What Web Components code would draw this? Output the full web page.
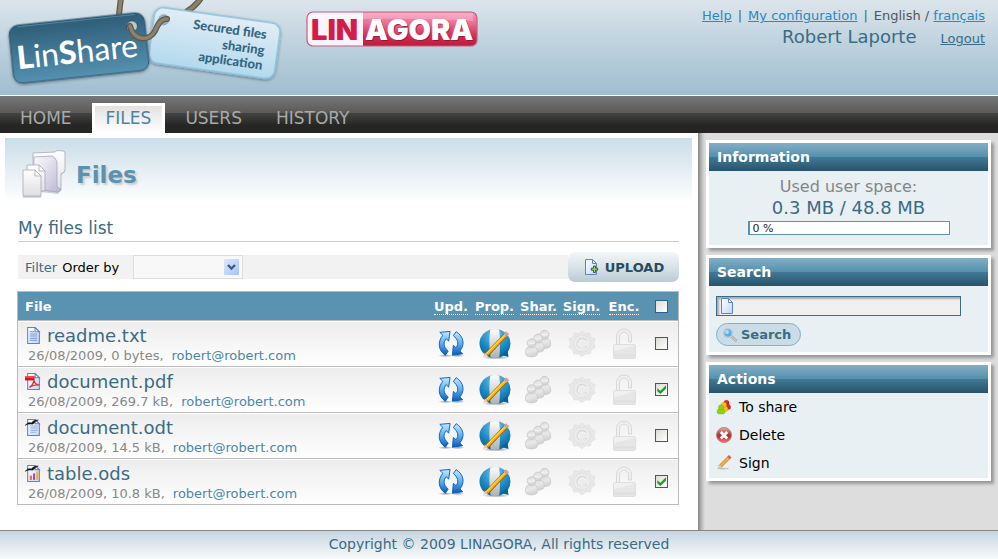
<!DOCTYPE html>
<html lang="en">
<head>
<meta charset="utf-8">
<title>LinShare - Files</title>
<style>
  body { margin: 0; font-family: "DejaVu Sans", Verdana, sans-serif; font-size: 13px; color: #000; }
</style>
</head>
<body>
<ls-app>
  <ls-header slot="header"></ls-header>
  <ls-nav slot="nav">
    <ls-tab href="#home">HOME</ls-tab>
    <ls-tab href="#files" current>FILES</ls-tab>
    <ls-tab href="#users">USERS</ls-tab>
    <ls-tab href="#history">HISTORY</ls-tab>
  </ls-nav>
  <ls-banner slot="main">Files</ls-banner>
  <ls-files slot="main"></ls-files>
  <ls-panel slot="side" heading="Information"><ls-quota></ls-quota></ls-panel>
  <ls-panel slot="side" heading="Search"><ls-search></ls-search></ls-panel>
  <ls-panel slot="side" heading="Actions"><ls-actions></ls-actions></ls-panel>
  <span slot="footer">Copyright © 2009 LINAGORA, All rights reserved</span>
</ls-app>

<script>
const define = (name, html, setup) => {
  const template = document.createElement('template');
  template.innerHTML = html;
  customElements.define(name, class extends HTMLElement {
    constructor() {
      super();
      this.attachShadow({ mode: 'open' }).append(template.content.cloneNode(true));
    }
    connectedCallback() { if (setup) setup(this, this.shadowRoot); }
  });
};

const page = `<path d="M2.500 .5h7l4 4v11h-11z" fill="url(#p)" stroke="#5f84c4"/><path d="M9.500 .5v4h4z" fill="#fff" stroke="#5f84c4"/>`;
const pageGrad = `<linearGradient id="p" x2="1" y2="1"><stop stop-color="#fff"/><stop offset="1" stop-color="#c3d6f7"/></linearGradient>`;
const bird = `<path d="M.3 6C2 3.300 4 3 6 3.800C7.500 1.600 10 1 12.500 1C10 2 9 3.300 7.500 4.800C4.500 4.600 2 4.600 .3 6z" fill="#111" stroke="#111" stroke-width=".5"/>`;
const person = (x, y) => `<g transform="translate(${x} ${y})"><path d="M.5 16c0-5 1.500-7.500 6.500-7.500s6.500 2.500 6.500 7.500c0 5-13 5-13 0z" fill="url(#m)" stroke="#cacaca" stroke-width=".8"/><circle cx="7" cy="5" r="4.600" fill="url(#m)" stroke="#c6c6c6" stroke-width=".8"/><path d="M3.500 4.500q3.500 2 7 0" fill="none" stroke="#f4f4f4" stroke-width="1.200"/></g>`;
const smallPerson = (x, y, c, d) => `<g transform="translate(${x} ${y})" fill="${c}" stroke="${d}" stroke-width=".4"><path d="M0 8c0-3 1-4 4-4s4 1 4 4c0 2-8 2-8 0z"/><circle cx="4" cy="2.800" r="2.600"/></g>`;
const icons = {
  txt: [16, 16, `<defs>${pageGrad}</defs>${page}<path d="M4.500 4.500h4M4.500 6.500h7M4.500 8.500h7M4.500 10.500h7M4.500 12.500h7" stroke="#6f92cf"/>`],
  blank: [16, 16, `<defs>${pageGrad}</defs>${page}`],
  pdf: [16, 16, `<defs>${pageGrad}</defs>${page}<path d="M0 3h9v4H0z" fill="#d5141c"/><path d="M0 3h9v1.500H0z" fill="#f0565a"/><path d="M4 13.500c2-1 4-4 4.500-6.500c.5 2 2 4 5 4.500c-3-.8-6 0-9.500 2" fill="none" stroke="#e03030" stroke-width="1.200"/>`],
  odt: [16, 16, `<defs>${pageGrad}</defs>${page}<path d="M5 6.500h7M5 8.500h7M5 10.500h7M5 12.500h5" stroke="#8fadde"/>${bird}`],
  ods: [16, 16, `<defs>${pageGrad}</defs>${page}<path d="M4.500 10h2v4h-2z" fill="#f0683c"/><path d="M7.500 8h2v6h-2z" fill="#9a4cc4"/><path d="M10.500 6h2v8h-2z" fill="#f5b51c"/>${bird}`],
  upload: [16, 16, `<defs>${pageGrad}</defs>${page}<path d="M10.500 7h2v2.200h2.200v2h-2.200v2.300h-2v-2.300H8.300v-2h2.200z" fill="#8fe05a" stroke="#3a4a3a" stroke-width=".9"/>`],
  update: [30, 30, `<defs><linearGradient id="u" x2="0" y2="1"><stop stop-color="#c3eaff"/><stop offset=".5" stop-color="#5fb0ec"/><stop offset="1" stop-color="#0a55b8"/></linearGradient><radialGradient id="s"><stop stop-color="#000" stop-opacity=".4"/><stop offset="1" stop-opacity="0"/></radialGradient></defs><ellipse cx="9" cy="27.500" rx="8" ry="1.600" fill="url(#s)"/><ellipse cx="22" cy="27.500" rx="8" ry="1.600" fill="url(#s)"/><g fill="url(#u)" stroke="#0b5fb8" stroke-linejoin="round"><path d="M3 2.500L14 1.500L12.500 12L10 9.300C6.500 13 6.500 18 12 22.500L9 27C1 22 .5 12 6.300 5.700z"/><path d="M17.500 6L20.500 1.800C29 7 30 16 24.500 22.500L27.500 25.500L16.500 27L17.500 16.500L20.500 19C23.500 14.500 22.500 10 17.500 6z"/></g>`],
  properties: [32, 32, `<defs><radialGradient id="b" cx=".5" cy=".2" r=".85"><stop stop-color="#6cc6ee"/><stop offset=".6" stop-color="#1682bd"/><stop offset="1" stop-color="#07588c"/></radialGradient><linearGradient id="w" x2="0" y2="1"><stop stop-color="#fff"/><stop offset="1" stop-color="#a9adb0"/></linearGradient><clipPath id="c"><ellipse cx="16" cy="15.500" rx="15.500" ry="14.500"/></clipPath><radialGradient id="s"><stop stop-opacity=".45"/><stop offset="1" stop-opacity="0"/></radialGradient></defs><ellipse cx="17" cy="29.500" rx="14" ry="2" fill="url(#s)"/><g clip-path="url(#c)"><path d="M0 0h32v32H0z" fill="url(#b)"/><path d="M11.500 0Q9 15 12 32h8Q22 15 20 0z" fill="url(#w)"/></g><path d="M22 27l7.500 2-1-7z" fill="#08639a"/><path d="M27.500 6L7.500 27" stroke="#8b5b12" stroke-width="4.200"/><path d="M27 6.500L8 26" stroke="#f9b716" stroke-width="3.200"/><path d="M26.500 6L7.500 25.500" stroke="#ffe06d"/><path d="M6 24.500L4 29l5-1.500z" fill="#e9cba1"/><path d="M28.700 4.700l-2 2" stroke="#d5a0a0" stroke-width="4.400"/><path d="M27.300 6.200l-1 1" stroke="#aaa" stroke-width="4.400"/>`],
  share: [32, 32, `<defs><linearGradient id="m" x2=".3" y2="1"><stop stop-color="#d6d6d6"/><stop offset=".5" stop-color="#e8e8e8"/><stop offset="1" stop-color="#d4d4d4"/></linearGradient></defs>${person(15, 1)}${person(8, 5)}${person(1, 10)}`],
  sign: [30, 30, `<path d="M15 1l3.500 3l4.500-1l1.500 4.500l4.500 2l-1.500 4.500l1.500 4.500l-4 2.500l-1 4.500l-5 0l-4 3l-4-3l-5 0l-1-4.500l-4-2.500l1.500-4.500l-1.500-4.500l4.500-2l1.500-4.500l4.500 1z" fill="#e8e8e8" stroke="#dfdfdf" stroke-width=".8" stroke-linejoin="round"/><circle cx="15" cy="14.500" r="9" fill="#ececec" stroke="#dedede" stroke-width=".8"/><path d="M19.500 11.500a5.200 5.200 0 1 0 0 6" fill="none" stroke="#dadada" stroke-width="2"/><path d="M19.500 13a4.500 4.500 0 1 0 -1 5.500" fill="none" stroke="#f7f7f7"/>`],
  lock: [28, 32, `<path d="M6.500 17V8.500a7.500 7.500 0 0 1 15 0V14h-3V8.500a4.500 4.500 0 0 0-9 0V17z" fill="#f0f0f0" stroke="#cfcfcf" stroke-width=".8"/><rect x="3.500" y="16.500" width="22" height="14" rx="1.500" fill="#e6e6e6" stroke="#dadada" stroke-width=".8"/><path d="M4 23q10-2 21-5.500v-.5H4z" fill="#f0f0f0"/><path d="M4 27.500h21" stroke="#dedede" stroke-width="2"/>`],
  chevron: [15, 16, `<defs><linearGradient id="g" x2="1" y2="1"><stop stop-color="#dce8ff"/><stop offset="1" stop-color="#a9c3f8"/></linearGradient></defs><rect width="15" height="16" rx="1" fill="url(#g)"/><path d="M4 6l3.500 3.500L11 6" fill="none" stroke="#3f5b86" stroke-width="2.400"/>`],
  find: [16, 16, `<path d="M9 9l5.500 5" stroke="#aaa" stroke-width="2.600"/><path d="M9 9l5 4.500" stroke="#e4d6cf"/><circle cx="6" cy="6" r="4.300" fill="#58aee8" stroke="#b9c8d6" stroke-width="1.600"/><circle cx="5" cy="5" r="2" fill="#a9dbfa"/>`],
  people: [16, 16, `${smallPerson(6.500, 1, '#df2626', '#a11')}${smallPerson(4, 3, '#f5c314', '#c80')}${smallPerson(1, 5.500, '#8fd012', '#6fae10')}`],
  remove: [16, 16, `<defs><linearGradient id="r" x2="0" y2="1"><stop stop-color="#e9b0ac"/><stop offset=".45" stop-color="#a84040"/><stop offset=".6" stop-color="#bb2b2b"/><stop offset="1" stop-color="#ff7a72"/></linearGradient></defs><circle cx="8" cy="8" r="7.500" fill="url(#r)" stroke="#b98080"/><path d="M4.800 5l6.400 6.500M11.200 5L4.800 11.500" stroke="#fff" stroke-width="2.800"/>`],
  pencil: [16, 16, `<path d="M1 13.500q3-2 5-1t6 .5l1 1q-7 1-12-.5z" fill="#bbb"/><path d="M1.500 10.500h4" stroke="#ccc"/><path d="M13 2.500L4.500 11" stroke="#b97618" stroke-width="3.400"/><path d="M13 2.500L4.500 11" stroke="#f7b045" stroke-width="2.400"/><path d="M14.300 1.200l-1.800 1.800" stroke="#dc5a5a" stroke-width="3.400"/><path d="M3.200 9.700L1 14l4.500-1.700z" fill="#dfc9a8"/>`],
  folder: [46, 50, `<defs><linearGradient id="f" x2="1" y2="1"><stop stop-color="#fbfbff"/><stop offset=".5" stop-color="#dcdaea"/><stop offset="1" stop-color="#b8b5cf"/></linearGradient><linearGradient id="k" x2="0" y2="1"><stop stop-color="#fff"/><stop offset="1" stop-color="#dedee4"/></linearGradient></defs><path d="M11 4l23-1.500l1-2l7 .5l1 2v19l-4 3v16l-3 3l-25-3z" fill="#a8a8b8" opacity=".5"/><path d="M11 3l22-1l2-1.500l7 .5l1 2v18l-4 3v16l-4 2l-24-4z" fill="url(#k)" stroke="#aaa8b8" stroke-width=".8"/><path d="M12 7l18-1l3 2l2 4v25l4 2l-3 3l-24-3z" fill="url(#f)" stroke="#a7a4bf" stroke-width=".8"/><g stroke="#a9a9ad" stroke-width=".8" fill="url(#k)"><path d="M5 15h12l6 6v20H5z"/><path d="M17 15v6h6z" fill="#fff"/><path d="M1 20h12l6 6v20H1z"/><path d="M13 20v6h6z" fill="#fff"/></g><path d="M1 47h18" stroke="#888" opacity=".6"/>`]
};
const iconStyle = '<style>:host{display:inline-block;line-height:0;flex:none}svg{display:block}</style>';
define('ls-icon', iconStyle, (host, root) => {
  const [w, h, body] = icons[host.getAttribute('name')];
  const width = Number(host.getAttribute('width') || w);
  root.innerHTML = `${iconStyle}<svg aria-hidden="true" width="${width}" height="${Math.round(h * width / w)}" viewBox="0 0 ${w} ${h}">${body}</svg>`;
});

define('ls-app', `
<style>
  :host { display: flex; flex-direction: column; min-height: 100vh; }
  .body { flex: 1; display: grid; grid-template-columns: minmax(0, 1fr) 300px; }
  main { background: #fff; padding: 5px 6px 0 5px; }
  aside { display: flex; flex-direction: column; gap: 7px; padding: 7px 7px 0 8px;
    background: linear-gradient(90deg, #858585, #b0b0b0 3px, #cacaca 5px, #ddd 7px); }
  footer { border-top: 1px solid #858585; height: 28px; line-height: 26px; text-align: center; font-size: 14px; color: #3b6b85;
    background: linear-gradient(#c6d5e0, #f8fafb); }
</style>
<slot name="header"></slot>
<slot name="nav"></slot>
<div class="body">
  <main><slot name="main"></slot></main>
  <aside><slot name="side"></slot></aside>
</div>
<footer><slot name="footer"></slot></footer>`);

define('ls-logo', `
<style>:host { display: block; } svg { display: block; }</style>
<svg width="290" height="95" viewBox="0 0 290 95" role="img" aria-label="LinShare, secured files sharing application">
  <defs>
    <linearGradient id="dark" x2="0" y2="1"><stop stop-color="#2e5d77"/><stop offset="1" stop-color="#5590b0"/></linearGradient>
    <linearGradient id="light" x2="0" y2="1"><stop stop-color="#e2edf5"/><stop offset="1" stop-color="#b2d9ee"/></linearGradient>
    <filter id="shade" x="-10%" y="-10%" width="120%" height="130%"><feDropShadow dx="0" dy="1" stdDeviation="1.500" flood-opacity=".45"/></filter>
  </defs>
  <path d="M119 15Q120 5 121 -2" stroke="#5f594a" stroke-width="6" fill="none"/>
  <path d="M119 15Q120 5 121 -2" stroke="#8b826b" stroke-width="3.500" fill="none"/>
  <path d="M186 12Q196 6 201 -2" stroke="#5f594a" stroke-width="6" fill="none"/>
  <path d="M186 12Q196 6 201 -2" stroke="#8b826b" stroke-width="3.500" fill="none"/>
  <g transform="rotate(8 214 43)" filter="url(#shade)">
    <rect x="151" y="15" width="127" height="56" rx="9" fill="url(#light)" stroke="#8cc0dc" stroke-width="1.500"/>
    <circle cx="161" cy="27" r="5" fill="#9eb5c2" stroke="#6f9ab3"/>
  </g>
  <g transform="rotate(8 266 39)" fill="#356680" font-family="Lato, sans-serif" font-weight="900" font-size="13" text-anchor="end">
    <text x="266" y="39">Secured files</text><text x="266" y="55">sharing</text><text x="266" y="70">application</text>
  </g>
  <g transform="rotate(-6 79 48)" filter="url(#shade)">
    <rect x="11" y="19" width="136" height="58" rx="9" fill="url(#dark)" stroke="#28566f"/>
    <path d="M20 20.500h118" stroke="#5f93ae" opacity=".7"/>
    <circle cx="134" cy="32" r="5.500" fill="#bccbd5" stroke="#24485c"/>
  </g>
  <text transform="rotate(-6 20 69)" x="18" y="69" fill="#fff" font-family="Lato, sans-serif" font-size="32"><tspan font-weight="900">L</tspan>in<tspan font-weight="900">S</tspan>hare</text>
  <path d="M130 26C134 42 150 41 155 31Q160 18 167 19" stroke="#5f594a" stroke-width="6" stroke-linecap="round" fill="none"/>
  <path d="M130 26C134 42 150 41 155 31Q160 18 167 19" stroke="#8b826b" stroke-width="3.500" stroke-linecap="round" fill="none"/>
</svg>`);

define('ls-brand', `
<style>:host { display: block; } svg { display: block; }</style>
<svg width="172" height="40" viewBox="0 0 172 40" role="img" aria-label="LINAGORA">
  <defs>
    <linearGradient id="red" x2="0" y2="1"><stop stop-color="#f8a3bf"/><stop offset=".35" stop-color="#ea6a92"/><stop offset=".65" stop-color="#d12a57"/><stop offset="1" stop-color="#b7152f"/></linearGradient>
    <clipPath id="round"><rect x="1" y="2" width="170" height="34" rx="6"/></clipPath>
  </defs>
  <g clip-path="url(#round)"><path d="M0 0h172v40H0z" fill="url(#red)"/><path d="M0 0h57v40H0z" fill="#f9f4fc"/><path d="M4 3h163v8q-80-5-163 0z" fill="#fff" opacity=".22"/></g>
  <rect x="1" y="2" width="170" height="34" rx="6" fill="none" stroke="#c4617f" stroke-width="1.200"/>
  <g font-family="Inter, sans-serif" font-weight="900" font-size="29">
    <text x="5" y="30" fill="#d31c48">LIN</text>
    <text x="60" y="31" fill="#701028" opacity=".6">AGORA</text>
    <text x="59" y="30" fill="#fff">AGORA</text>
  </g>
</svg>`);

define('ls-header', `
<style>
  :host { display: block; }
  header { display: flex; align-items: flex-start; height: 95px; border-bottom: 1px solid #fff;
    background: linear-gradient(#dce5ec, #b4ccd9 62%, #9fbdd1); }
  ls-brand { padding: 10px 0 0 16px; }
  .user { margin-left: auto; padding: 7px 13px 0 0; text-align: right; color: #3b6b85; }
  .row { display: flex; justify-content: flex-end; gap: 6px; line-height: 17px; }
  .who { display: flex; justify-content: flex-end; align-items: baseline; gap: 24px; line-height: 26px; }
  .who strong { font-weight: normal; font-size: 18px; }
  a { color: #2a89c0; } .who a { color: #3b6b85; }
  .lang { color: #555; }
</style>
<header>
  <ls-logo></ls-logo><ls-brand></ls-brand>
  <div class="user">
    <div class="row"><a href="#help">Help</a><span>|</span><a href="#config">My configuration</a><span>|</span><span class="lang">English / <a href="#fr">français</a></span></div>
    <div class="who"><strong>Robert Laporte</strong><a href="#logout">Logout</a></div>
  </div>
</header>`);

define('ls-nav', `
<style>
  :host { display: block; }
  nav { display: flex; gap: 6px; align-items: flex-end; height: 37px; padding-left: 6px;
    background: linear-gradient(#777, #5a5a5a 45%, #434343 46%, #252624 80%, #252624); }
</style>
<nav><slot></slot></nav>`);

define('ls-tab', `
<style>
  :host { display: block; }
  a { display: block; box-sizing: border-box; height: 30px; line-height: 24px; padding: 0 11px; border: 3px solid transparent; border-bottom: 0;
    font-size: 17px; color: #a9a9a9; text-decoration: none; }
  a[aria-current] { color: #4a83a1; border-color: #fff; background: linear-gradient(#e2e2e2, #fff) padding-box; }
</style>
<a><slot></slot></a>`, (host, root) => {
  const link = root.querySelector('a');
  link.href = host.getAttribute('href');
  if (host.hasAttribute('current')) link.setAttribute('aria-current', 'page');
});

define('ls-banner', `
<style>
  :host { display: flex; align-items: flex-start; gap: 8px; height: 64px; padding: 12px 0 0 17px; box-sizing: border-box;
    background: linear-gradient(#cadde8, #fff); }
  h1 { margin: 11px 0 0; font-size: 23px; line-height: 28px; color: #5993b1; text-shadow: 2px 2px 2px #ccc; }
</style>
<ls-icon name="folder"></ls-icon><h1><slot></slot></h1>`);

const files = [
  ['txt', 'readme.txt', '0 bytes', false],
  ['pdf', 'document.pdf', '269.7 kB', true],
  ['odt', 'document.odt', '14.5 kB', false],
  ['ods', 'table.ods', '10.8 kB', true]
];
const columns = [['Upd.', 'Update', 'update', 28], ['Prop.', 'Properties', 'properties', 32], ['Shar.', 'Share', 'share', 30], ['Sign.', 'Sign', 'sign', 28], ['Enc.', 'Encrypt', 'lock', 28]];

define('ls-files', `
<style>
  :host { display: block; padding: 15px 13px 0 12px; }
  h2 { margin: 0 0 10px 1px; padding-bottom: 1px; border-bottom: 1px solid #b8d2e3; font-size: 17px; font-weight: normal; line-height: 23px; color: #3b6b85; }
  .tools { display: flex; align-items: center; margin: 0 0 9px 1px; }
  .filter { flex: 1; display: flex; align-items: center; gap: 5px; height: 24px; padding-left: 7px; background: #f2f2f2; }
  .filter span { color: #3b6b85; }
  .pick { display: grid; margin-left: 9px; align-items: center; }
  .pick > * { grid-area: 1 / 1; }
  .pick ls-icon { justify-self: end; margin-right: 4px; pointer-events: none; }
  select { appearance: none; width: 110px; height: 24px; border: 1px solid #ddd; border-radius: 0; background: #f8f8f8; }
  .upload { display: flex; align-items: center; justify-content: center; gap: 6px; width: 111px; height: 30px; padding: 0; border: 0; border-radius: 7px;
    background: linear-gradient(#f4f7f8, #d3dee4 60%, #b9cbd4); color: #254c60; font: bold 13px "DejaVu Sans", sans-serif; }
  table { width: 100%; border-collapse: collapse; table-layout: fixed; border: 1px solid #bbb; }
  thead tr { height: 29px; background: #5993b1; color: #fff; }
  th { padding: 0; } th:first-child { padding-left: 7px; text-align: left; }
  abbr { text-decoration: none; border-bottom: 1px dotted #fff; }
  tbody tr { height: 46px; background: linear-gradient(#ededed, #fff); border-top: 1px solid #bbb; }
  td { padding: 0; text-align: center; vertical-align: middle; }
  td:first-child { padding-left: 7px; text-align: left; }
  .name { display: flex; align-items: flex-start; gap: 5px; line-height: 24px; }
  .name ls-icon { margin-top: 3px; }
  .name a { font-size: 18px; color: #3b6b85; text-decoration: none; }
  .meta { padding-left: 3px; line-height: 16px; color: #888; }
  .meta a { margin-left: 8px; color: #4a88a8; text-decoration: none; }
  .act { display: block; margin: 0 auto; padding: 0; border: 0; background: none; }
  .act ls-icon { display: block; width: fit-content; margin: 0 auto; }
  input { appearance: none; display: grid; place-items: center; width: 13px; height: 13px; margin: 0 auto; border: 1px solid #2b5f8c; background: linear-gradient(135deg, #dcdcd6, #fff); }
  input:checked::before { content: ""; width: 9px; height: 9px; background: #21a121; clip-path: polygon(0 35%, 35% 65%, 100% 0, 100% 38%, 35% 100%, 0 70%); }
</style>
<h2>My files list</h2>
<div class="tools">
  <div class="filter">
    <span>Filter</span>
    <label for="order">Order by</label>
    <div class="pick"><select id="order"><option></option></select><ls-icon name="chevron"></ls-icon></div>
  </div>
  <button class="upload" type="button"><ls-icon name="upload"></ls-icon>UPLOAD</button>
</div>
<table>
  <colgroup><col><col style="width:43px"><col style="width:44px"><col style="width:44px"><col style="width:42px"><col style="width:43px"><col style="width:33px"></colgroup>
  <thead></thead><tbody></tbody>
</table>`, (host, root) => {
  root.querySelector('thead').innerHTML = `<tr><th scope="col">File</th>${columns.map(c => `<th scope="col"><abbr title="${c[1]}">${c[0]}</abbr></th>`).join('')}<th scope="col"><input type="checkbox" aria-label="Select all"></th></tr>`;
  root.querySelector('tbody').innerHTML = files.map(([icon, name, size, on]) => `<tr><td>
    <div class="name"><ls-icon name="${icon}" width="17"></ls-icon><a href="#${name}">${name}</a></div>
    <div class="meta">26/08/2009, ${size},<a href="mailto:robert@robert.com">robert@robert.com</a></div></td>
    ${columns.map((c, i) => `<td><button class="act" type="button" aria-label="${c[1]} ${name}"${i > 1 ? ' disabled' : ''}><ls-icon name="${c[2]}" width="${c[3]}"></ls-icon></button></td>`).join('')}
    <td><input type="checkbox" aria-label="Select ${name}"${on ? ' checked' : ''}></td></tr>`).join('');
});

define('ls-panel', `
<style>
  :host { display: block; border: 3px solid #fff; background: #e8f0f4; box-shadow: 3px 3px 3px #999; }
  h2 { margin: 0; padding-left: 8px; height: 28px; line-height: 28px; font-size: 14px; color: #fff;
    background: linear-gradient(#84afc6, #5590ad 49%, #417a97 50%, #27536a); }
</style>
<h2></h2><slot></slot>`, (host, root) => { root.querySelector('h2').textContent = host.getAttribute('heading'); });

define('ls-quota', `
<style>
  :host { display: block; padding: 6px 0 10px; text-align: center; }
  .label { font-size: 16px; line-height: 20px; color: #858585; }
  .value { font-size: 18px; line-height: 22px; color: #3b6b85; margin-bottom: 2px; }
  .bar { box-sizing: border-box; width: 202px; height: 14px; margin: 0 auto; padding-left: 3px; border: 1px solid #5993b1; border-left-width: 2px;
    background: #fff; color: #222; font-size: 11px; line-height: 13px; text-align: left; }
</style>
<div class="label">Used user space:</div><div class="value">0.3 MB / 48.8 MB</div>
<div class="bar" role="progressbar" aria-label="Used user space" aria-valuenow="0" aria-valuemin="0" aria-valuemax="100">0 %</div>`);

define('ls-search', `
<style>
  :host { display: block; padding: 10px 7px 6px; }
  .field { box-sizing: border-box; display: flex; align-items: center; width: 245px; max-width: 100%; height: 20px; padding-left: 2px; border: 1px solid #3b6b85;
    background: #f0f0f0; box-shadow: inset 2px 2px 2px #aaa; margin-bottom: 7px; }
  input { flex: 1; min-width: 0; border: 0; padding: 0 4px; background: none; font: inherit; outline: 0; }
  button { display: flex; align-items: center; gap: 3px; height: 23px; padding: 0 9px 0 5px; border: 1px solid #86b0c6; border-radius: 12px; background: #cadde6;
    color: #3b6b85; font: bold 13px "DejaVu Sans", sans-serif; }
</style>
<div class="field"><ls-icon name="blank"></ls-icon><input type="text" aria-label="Search files"></div>
<button type="button"><ls-icon name="find"></ls-icon>Search</button>`);

define('ls-actions', `
<style>
  :host { display: block; padding-bottom: 1px; }
  ul { margin: 0; padding: 0 7px; list-style: none; }
  a { display: flex; align-items: center; gap: 7px; height: 28px; font-size: 14px; color: #000; text-decoration: none; }
</style>
<ul>
  <li><a href="#share"><ls-icon name="people"></ls-icon>To share</a></li>
  <li><a href="#delete"><ls-icon name="remove"></ls-icon>Delete</a></li>
  <li><a href="#sign"><ls-icon name="pencil"></ls-icon>Sign</a></li>
</ul>`);
</script>
</body>
</html>
